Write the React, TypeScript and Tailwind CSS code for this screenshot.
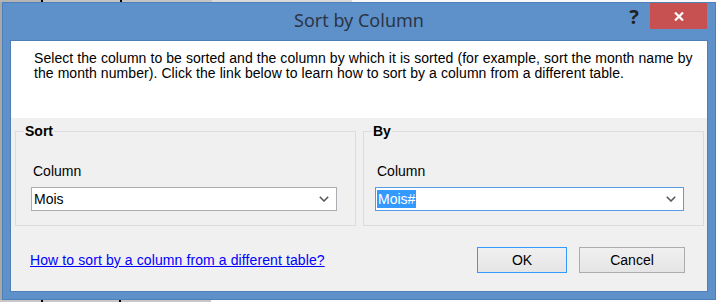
import React from "react"

const ui = { fontFamily: '"Liberation Sans", Arial, sans-serif' }

function Chevron() {
    return (
        <svg width="10" height="6" viewBox="0 0 10 6" className="shrink-0">
            <polyline points="0.8,0.8 5,5 9.2,0.8" fill="none" stroke="#5a5a5a" strokeWidth="1.6" />
        </svg>
    )
}

function Group({ title, children, className }: { title: string; children: React.ReactNode; className?: string }) {
    return (
        <fieldset className={"border border-[#dcdcdc] h-[102px] " + (className ?? "")}>
            <legend className="ml-[8px] px-px text-[14px] leading-[15px] font-bold text-black">{title}</legend>
            {children}
        </fieldset>
    )
}

export default function App() {
    return (
        <div className="w-[716px] h-[302px] overflow-hidden flex flex-col bg-[#f4f4f4]" style={ui}>
            {/* spreadsheet behind the dialog */}
            <div className="flex h-[2px] shrink-0">
                <div className="w-[41px] bg-[#b4b4b4]" />
                <div className="w-[2px] bg-black" />
                <div className="w-[77px] bg-[#c4c4c4]" />
                <div className="w-[2px] bg-black" />
                <div className="w-[90px] bg-[#c4c4c4]" />
                <div className="w-[140px] bg-[#dadada]" />
                <div className="flex-1 bg-[#f8f8f8]" />
            </div>

            <div className="flex flex-1">
                <div className="w-[2px] bg-[#a8a8a8]" />

                {/* window */}
                <div className="w-[714px] h-[298px] bg-[#5e91c9] border border-[#4d7fb8] flex flex-col">
                    {/* title bar */}
                    <div className="relative h-[37px] flex items-center justify-center shrink-0">
                        <span
                            className="text-[18px] text-[#2b3546] pb-[2px]"
                            style={{ fontFamily: '"Noto Sans", "Open Sans", sans-serif' }}
                        >
                            Sort by Column
                        </span>
                        <span
                            className="absolute right-[74px] top-[3px] w-[14px] text-center text-[20px] leading-[22px] font-bold text-[#222]"
                            style={{ fontFamily: '"Noto Sans", sans-serif' }}
                        >
                            ?
                        </span>
                        <div className="absolute right-[8px] top-0 w-[57px] h-[26px] bg-[#c75050] flex items-center justify-center">
                            <svg width="10" height="9" viewBox="0 0 10 9">
                                <path d="M1 0.5 L9 8.5 M9 0.5 L1 8.5" stroke="#fff" strokeWidth="2.2" />
                            </svg>
                        </div>
                    </div>

                    {/* client area */}
                    <div className="mx-[7px] h-[252px] border border-[#4f7fb6] flex flex-col">
                        <div className="bg-white h-[77px] pl-[23px] pr-[8px] pt-[10px] text-[14px] leading-[15px] tracking-[0.07px] text-black whitespace-nowrap">
                            Select the column to be sorted and the column by which it is sorted (for example, sort the month name by
                            <br />
                            the month number). Click the link below to learn how to sort by a column from a different table.
                        </div>

                        <div className="flex-1 bg-[#f0f0f0] flex flex-col">
                            <div className="flex gap-[7px] pl-[4px] pt-[6px]">
                                <Group title="Sort" className="w-[341px]">
                                    <div className="pl-[17px] pt-[25px] text-[14px] leading-[15px] text-black">Column</div>
                                    <div className="ml-[15px] mt-[8px] w-[306px] h-[24px] bg-white border border-[#abadb3] flex items-center pl-[2px] pr-[7px]">
                                        <span className="flex-1 text-[14px] leading-[15px] text-black">Mois</span>
                                        <Chevron />
                                    </div>
                                </Group>
                                <Group title="By" className="w-[341px]">
                                    <div className="pl-[13px] pt-[25px] text-[14px] leading-[15px] text-black">Column</div>
                                    <div className="ml-[11px] mt-[8px] w-[309px] h-[24px] bg-white border border-[#569de5] flex items-center pl-[1px] pr-[7px]">
                                        <span className="flex-1 flex">
                                            <span className="bg-[#3399ff] text-white text-[14px] leading-[18px] px-px">Mois#</span>
                                        </span>
                                        <Chevron />
                                    </div>
                                </Group>
                            </div>

                            <div className="flex items-center pl-[19px] pr-[22px] mt-[21px]">
                                <a href="#" className="flex-1 text-[14px] leading-[15px] tracking-[0.1px] text-[#0000ff] underline mt-[1px]">
                                    How to sort by a column from a different table?
                                </a>
                                <button className="w-[90px] h-[26px] border border-[#3399ff] bg-gradient-to-b from-[#f0f0f0] to-[#e5e5e5] text-[14px] text-black">
                                    OK
                                </button>
                                <button className="ml-[12px] w-[106px] h-[26px] border border-[#acacac] bg-gradient-to-b from-[#f0f0f0] to-[#e5e5e5] text-[14px] text-black">
                                    Cancel
                                </button>
                            </div>
                        </div>
                    </div>
                </div>
            </div>

            <div className="flex h-[2px] shrink-0">
                <div className="w-[41px] bg-[#c8c8c8]" />
                <div className="w-[2px] bg-black" />
                <div className="w-[76px] bg-[#c8c8c8]" />
                <div className="w-[2px] bg-black" />
                <div className="w-[90px] bg-[#c8c8c8]" />
                <div className="flex-1 bg-white" />
            </div>
        </div>
    )
}
